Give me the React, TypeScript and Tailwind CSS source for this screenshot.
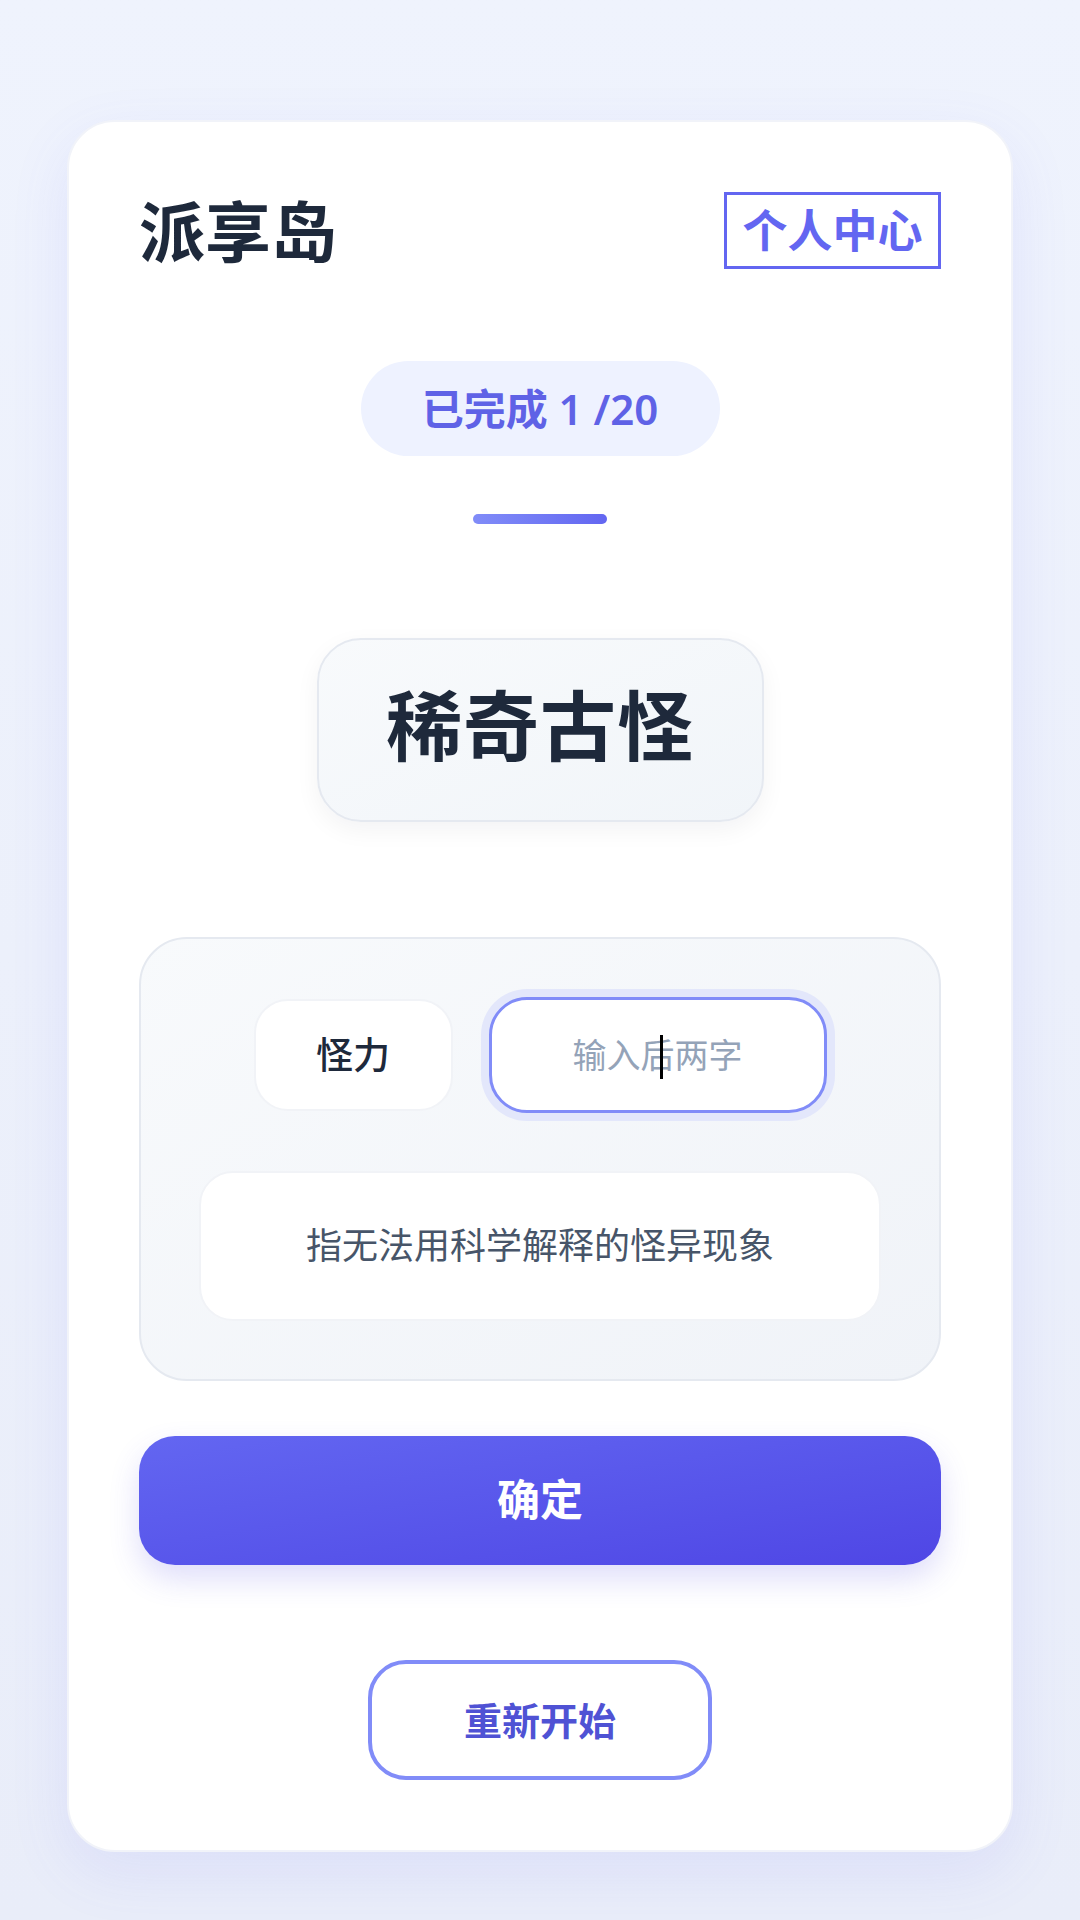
export default function App() {
  return (
    <div
      className="min-h-screen w-full bg-gradient-to-b from-[#eff3fd] to-[#e9edf9] px-[67px] pt-[120px] pb-[69px]"
      style={{ fontFamily: '"Noto Sans", "Noto Sans CJK SC", sans-serif' }}
    >
      <div className="flex flex-col items-center rounded-[48px] border-2 border-[#f1f3f9] bg-white px-[70px] pt-[70px] pb-[70px] shadow-[0_20px_60px_rgba(99,102,241,0.10)]">
        {/* header */}
        <div className="flex w-full items-center justify-between">
          <h1 className="text-[66px] font-bold leading-none text-[#1e293b]">派享岛</h1>
          <button className="flex h-[77px] w-[217px] items-center justify-center border-[3px] border-[#6366f1] text-[45px] font-bold leading-none text-[#6366f1]">
            个人中心
          </button>
        </div>

        {/* progress */}
        <div className="mt-[92px] flex h-[95px] w-[359px] items-center justify-center rounded-full bg-[#eef2ff] text-[42px] font-semibold text-[#5f62e6]">
          已完成 1 /20
        </div>
        <div className="mt-[58px] h-[10px] w-[134px] rounded-full bg-gradient-to-r from-[#818cf8] to-[#6366f1]" />

        {/* word */}
        <div className="mt-[114px] flex h-[184px] w-[447px] items-center justify-center rounded-[44px] border-2 border-[#e5e9f0] bg-gradient-to-br from-[#f8fafc] to-[#f1f5f9] shadow-[0_8px_24px_rgba(15,23,42,0.05)]">
          <span className="-mt-[8px] text-[76px] font-bold leading-none tracking-[1px] text-[#1e293b]">稀奇古怪</span>
        </div>

        {/* answer panel */}
        <div className="mt-[115px] flex w-full flex-col items-center gap-[58px] rounded-[48px] border-2 border-[#e5e9f0] bg-gradient-to-br from-[#f8fafc] to-[#f0f3f8] px-[58px] py-[58px]">
          <div className="flex items-center gap-[36px]">
            <div className="flex h-[112px] w-[199px] items-center justify-center rounded-[34px] border-2 border-[#f1f3f7] bg-white text-[37px] font-medium text-[#1e293b]">
              怪力
            </div>
            <div className="relative flex h-[116px] w-[338px] items-center justify-center rounded-[38px] border-[3px] border-[#818cf8] bg-white shadow-[0_0_0_8px_#e3e7fb]">
              <span className="text-[34px] text-[#94a3b8]">输入后两字</span>
              <span className="absolute left-[168px] top-[35px] h-[44px] w-[3px] bg-black" />
            </div>
          </div>
          <div className="flex h-[150px] w-full items-center justify-center rounded-[34px] border-2 border-[#f1f3f7] bg-white text-[36px] text-[#475569]">
            指无法用科学解释的怪异现象
          </div>
        </div>

        {/* actions */}
        <button className="mt-[55px] flex h-[129px] w-full items-center justify-center rounded-[36px] bg-gradient-to-br from-[#6366f1] to-[#4f46e5] text-[43px] font-bold text-white shadow-[0_14px_30px_rgba(79,70,229,0.18)]">
          确定
        </button>
        <button className="mt-[95px] flex h-[120px] w-[344px] items-center justify-center rounded-[38px] border-4 border-[#818cf8] bg-white text-[38px] font-bold text-[#4f52d4]">
          重新开始
        </button>
      </div>
    </div>
  );
}
